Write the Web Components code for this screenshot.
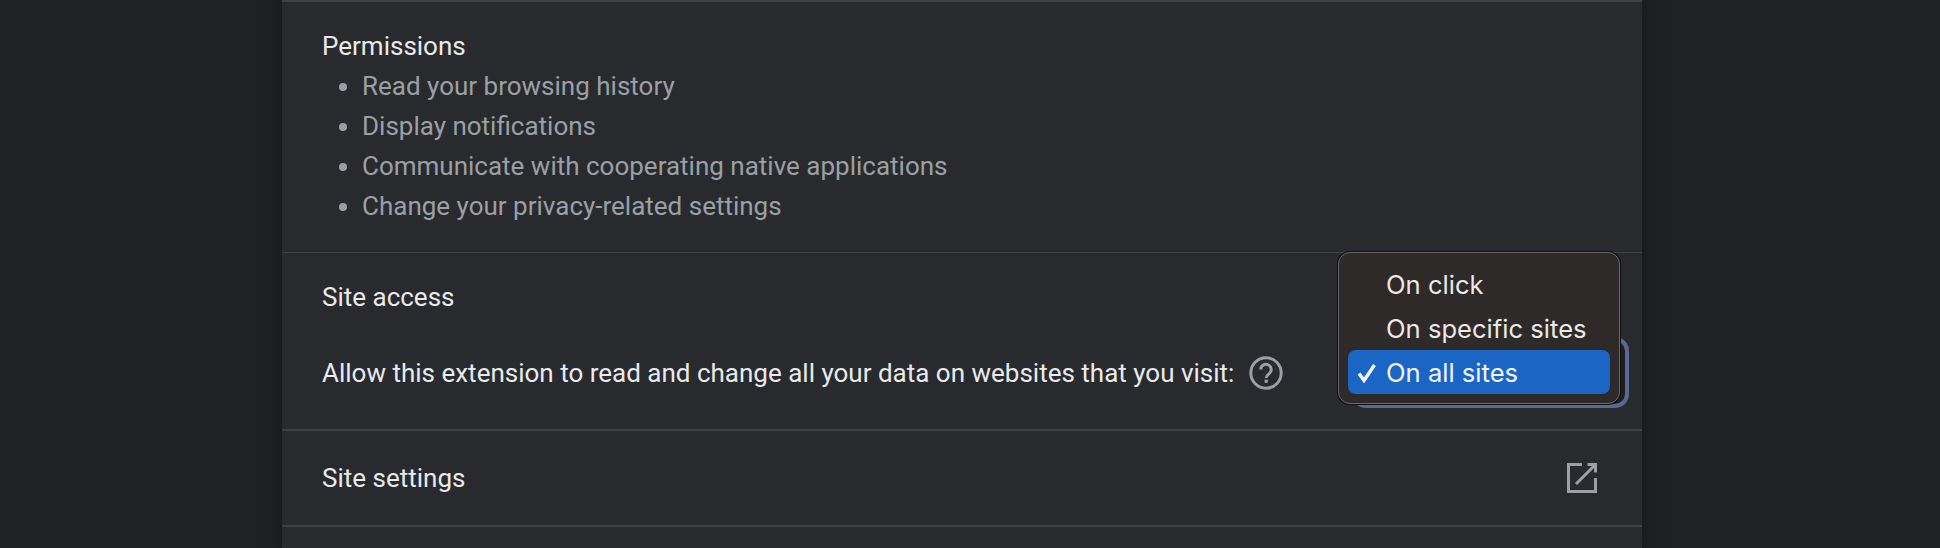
<!DOCTYPE html><html lang="en">
<head>
    <meta charset="UTF-8">
    <title>Extension details</title>
    <style>
        html, body { margin: 0; height: 100%; background: #202124; overflow: hidden; }
        body { display: flex; justify-content: center; padding-right: 16px; box-sizing: border-box; font-family: Roboto, "Liberation Sans", sans-serif; }
    </style>
</head>
<body>
    <details-card>
        <permissions-section title-text="Permissions">
            <li>Read your browsing history</li>
            <li>Display notifications</li>
            <li>Communicate with cooperating native applications</li>
            <li>Change your privacy-related settings</li>
        </permissions-section>
        <site-access></site-access>
        <link-row>Site settings</link-row>
    </details-card>
<script>
    class DetailsCard extends HTMLElement {
        constructor() {
            super();
            this.attachShadow({ mode: "open" });
            this.shadowRoot.innerHTML = `
                <style>
                    :host { display: block; box-sizing: border-box; flex: none; width: 1360px; height: 548px; background: #292a2d; color: #e8eaed;
                        font-size: 26px; border-top: 2px solid #3f4043; box-shadow: 0 0 14px 4px #18191b; }
                </style>
                <slot></slot>
            `;
        }
    }

    class PermissionsSection extends HTMLElement {
        constructor() {
            super();
            this.attachShadow({ mode: "open" });
            this.shadowRoot.innerHTML = `
                <style>
                    :host { display: block; box-sizing: border-box; height: 251px; padding: 24px 40px 0; border-bottom: 1px solid #3f4043; }
                    .title { line-height: 40px; }
                    ul { margin: 0; padding: 0 0 0 40px; color: #9aa0a6; line-height: 40px; }
                    ::slotted(li) { height: 40px; }
                </style>
                <div class="title">${this.getAttribute("title-text")}</div>
                <ul><slot></slot></ul>
            `;
        }
    }

    class SiteAccess extends HTMLElement {
        constructor() {
            super();
            this.attachShadow({ mode: "open" });
            this.shadowRoot.innerHTML = `
                <style>
                    :host { display: block; box-sizing: border-box; position: relative; height: 178px; padding: 24px 40px 0; border-bottom: 2px solid #3f4043; }
                    .title { line-height: 40px; }
                    .row { display: flex; align-items: center; margin-top: 24px; height: 63px; }
                    .text { flex: none; }
                    svg { flex: none; margin-left: 15px; }
                    .select { margin-left: auto; margin-right: -23px; width: 269px; height: 63px; box-sizing: border-box; border-radius: 10px;
                        background: #1f1d1e; outline: 4px solid #566b93; }
                    site-menu { position: absolute; left: 1056px; top: -1px; }
                </style>
                <div class="title">Site access</div>
                <div class="row">
                    <span class="text">Allow this extension to read and change all your data on websites that you visit:</span>
                    <svg width="34" height="34" viewBox="0 0 34 34" fill="none">
                        <circle cx="17" cy="17" r="15.200" stroke="#9aa0a6" stroke-width="3"/>
                        <path d="M11.800 13.400a5.200 5.200 0 1 1 8.600 4c-1.900 1.500-3.200 2.400-3.200 4.600" stroke="#9aa0a6" stroke-width="3"/>
                        <rect x="15.600" y="23.600" width="3.200" height="3.200" fill="#9aa0a6"/>
                    </svg>
                    <div class="select"></div>
                </div>
                <site-menu></site-menu>
            `;
        }
    }

    class SiteMenu extends HTMLElement {
        constructor() {
            super();
            this.attachShadow({ mode: "open" });
            this.shadowRoot.innerHTML = `
                <style>
                    :host { display: block; box-sizing: border-box; width: 282px; height: 152px; padding: 9px 9px 10px; border-radius: 12px;
                        background: #2f2a2a; border: 1px solid #6b6967; box-shadow: 0 0 0 1px #111; color: #ece9e6; font: 25.600px Inter, Roboto, sans-serif; }
                    .item { display: flex; align-items: center; height: 44px; padding-left: 38px; position: relative; border-radius: 8px; }
                    .item.on { background: #1b66c4; color: #f2f6fc; }
                    svg { position: absolute; left: 9px; top: 13px; }
                </style>
                <div class="item">On click</div>
                <div class="item">On specific sites</div>
                <div class="item on">
                    <svg width="20" height="20" viewBox="0 0 20 20" fill="none"><path d="M2 10.500l5 7L17.500 2" stroke="#f2f6fc" stroke-width="3.400"/></svg>
                    On all sites
                </div>
            `;
        }
    }

    class LinkRow extends HTMLElement {
        constructor() {
            super();
            this.attachShadow({ mode: "open" });
            this.shadowRoot.innerHTML = `
                <style>
                    :host { display: flex; align-items: center; justify-content: space-between; box-sizing: border-box; height: 96px; padding: 0 45px 0 40px;
                        border-bottom: 2px solid #3f4043; }
                    svg { flex: none; }
                </style>
                <slot></slot>
                <svg width="30" height="30" viewBox="0 0 30 30" fill="none" stroke="#9aa0a6" stroke-width="3">
                    <path d="M15 1.500H1.500v27h27V15"/>
                    <path d="M9 21L28 2"/>
                    <path d="M20.500 1.500h8V9.500"/>
                </svg>
            `;
        }
    }

    customElements.define("details-card", DetailsCard);
    customElements.define("permissions-section", PermissionsSection);
    customElements.define("site-menu", SiteMenu);
    customElements.define("site-access", SiteAccess);
    customElements.define("link-row", LinkRow);
</script>
</body>
</html>
